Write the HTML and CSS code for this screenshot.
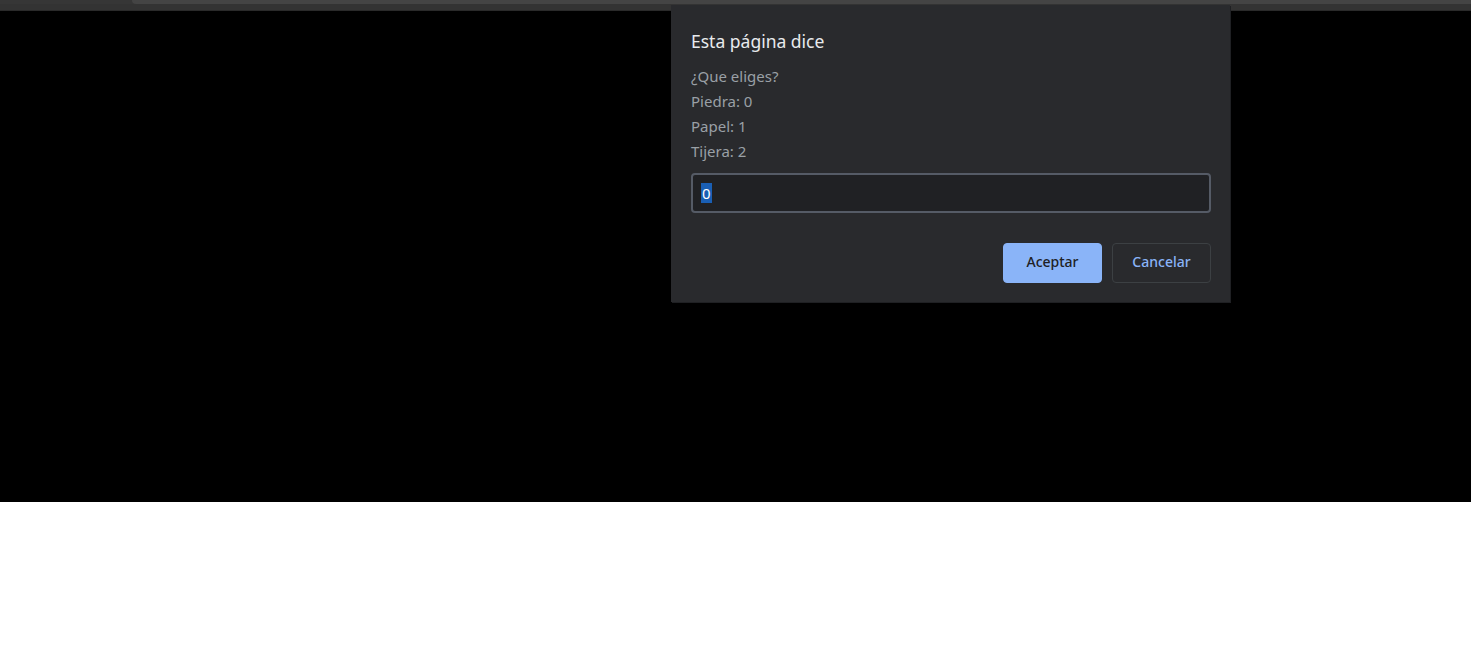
FILE: index.html
```html
<!DOCTYPE html>
<html lang="es">
<head>
<meta charset="utf-8">
<title>Piedra, papel o tijera</title>
<link rel="stylesheet" href="styles.css">
</head>
<body>
<div class="chrome">
  <div class="toolbar">
    <div class="toolbar-left"></div>
    <div class="omnibox"></div>
  </div>
  <div class="tabstrip"></div>
</div>
<main class="viewport"></main>
<div class="page-bottom"></div>

<div class="dialog" role="dialog">
  <h1 class="dialog-title">Esta página dice</h1>
  <div class="dialog-message">
    <p>¿Que eliges?</p>
    <p>Piedra: 0</p>
    <p>Papel: 1</p>
    <p>Tijera: 2</p>
  </div>
  <div class="dialog-input"><span class="sel">0</span></div>
  <div class="dialog-buttons">
    <button class="btn btn-primary">Aceptar</button>
    <button class="btn btn-secondary">Cancelar</button>
  </div>
</div>
</body>
</html>
```

FILE: styles.css
```css
html, body {
  margin: 0;
  padding: 0;
  background: #ffffff;
  font-family: "Noto Sans", "Open Sans", sans-serif;
}

.chrome {
  height: 11px;
  display: flex;
  flex-direction: column;
  background: #353535;
}

.toolbar {
  height: 4px;
  display: flex;
  background: #363636;
}

.toolbar-left {
  width: 132px;
}

.omnibox {
  flex: 1;
  background: #444444;
  border-bottom-left-radius: 8px;
}

.tabstrip {
  flex: 1;
  background: #333333;
  border-bottom: 1px solid #2a2a2a;
}

.viewport {
  display: block;
  height: 491px;
  background: #000000;
}

.page-bottom {
  height: 146px;
  background: #ffffff;
}

.dialog {
  position: absolute;
  left: 671px;
  top: 5px;
  width: 559px;
  height: 297px;
  box-sizing: border-box;
  background: #292a2d;
  padding: 24px 19px 20px 20px;
  box-shadow: 1px 1px 0 #1f2023;
}

.dialog-title {
  margin: 0;
  font-size: 17.5px;
  font-weight: 400;
  color: #e8eaed;
  line-height: 24px;
}

.dialog-message {
  margin-top: 11px;
  color: #9aa0a6;
  font-size: 15px;
}

.dialog-message p {
  margin: 0;
  line-height: 25px;
}

.dialog-input {
  margin-top: 9px;
  height: 40px;
  box-sizing: border-box;
  border: 2px solid #555b66;
  border-radius: 4px;
  background: #202124;
  display: flex;
  align-items: center;
  padding-left: 8px;
  font-size: 15px;
  color: #e8eaed;
}

.sel {
  background: #1a5fb4;
  color: #ffffff;
  line-height: 20px;
  padding: 0 1px;
}

.dialog-buttons {
  margin-top: 30px;
  display: flex;
  justify-content: flex-end;
  gap: 10px;
}

.btn {
  width: 99px;
  height: 40px;
  border-radius: 4px;
  font-family: "Noto Sans", "Open Sans", sans-serif;
  font-size: 14px;
  font-weight: 500;
  line-height: 18px;
  padding: 0 0 2px 0;
  cursor: pointer;
}

.btn-primary {
  background: #8ab4f8;
  border: 1px solid #8ab4f8;
  color: #202124;
}

.btn-secondary {
  background: #292a2d;
  border: 1px solid #3c4043;
  color: #8ab4f8;
}
```
